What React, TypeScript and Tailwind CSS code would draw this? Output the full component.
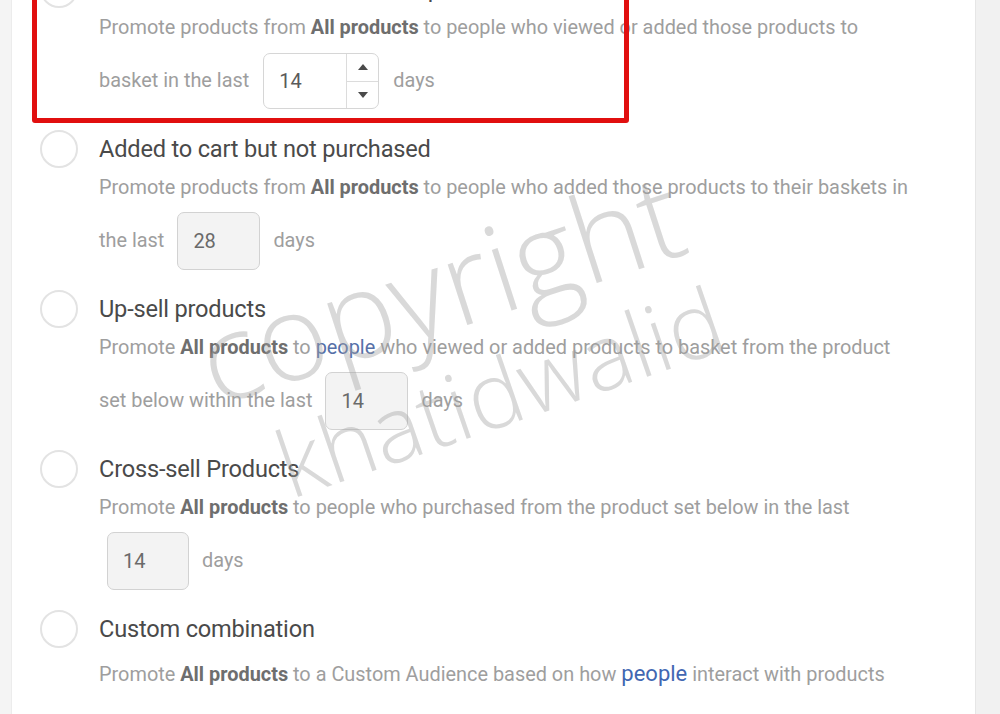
import React from 'react';

type InputProps = { value: string; width: string; spinner?: boolean };

function DaysInput({ value, width, spinner }: InputProps) {
  if (spinner) {
    return (
      <div className={`flex h-[56px] ${width} rounded-[7px] border border-[#d6d6d6] bg-white`}>
        <div className="flex flex-1 items-center pl-[15px] text-[20px] text-[#5a5a5a]">{value}</div>
        <div className="flex w-[32px] flex-col border-l border-[#dcdcdc]">
          <div className="flex flex-1 items-center justify-center border-b border-[#dcdcdc]">
            <svg width="12" height="8" viewBox="0 0 12 8">
              <path d="M6 1 L11 7 L1 7 Z" fill="#4a4a4a" />
            </svg>
          </div>
          <div className="flex flex-1 items-center justify-center">
            <svg width="12" height="8" viewBox="0 0 12 8">
              <path d="M1 1 L11 1 L6 7 Z" fill="#4a4a4a" />
            </svg>
          </div>
        </div>
      </div>
    );
  }
  return (
    <div
      className={`flex h-[58px] ${width} items-center rounded-[7px] border border-[#d2d2d2] bg-[#f3f3f3] pl-[15px] text-[20px] text-[#6a6a6a]`}
    >
      {value}
    </div>
  );
}

function Radio() {
  return <div className="h-[38px] w-[38px] shrink-0 rounded-full border-2 border-[#e3e3e3] bg-white" />;
}

function Row({ title, children, last }: { title: string; children: React.ReactNode; last?: boolean }) {
  return (
    <div className={last ? '' : 'pb-[24px]'}>
      <div className="flex h-[30px] items-center gap-[21px]">
        <Radio />
        <div className="text-[23.6px] leading-[30px] tracking-[-0.2px] text-[#4a4a4a]">{title}</div>
      </div>
      <div className={`ml-[59px] ${last ? 'mt-[15px]' : 'mt-[9px]'}`}>{children}</div>
    </div>
  );
}

const B = ({ children }: { children: React.ReactNode }) => (
  <span className="font-bold text-[#6e6e6e]">{children}</span>
);

export default function App() {
  return (
    <div className="flex h-[714px] w-[1000px] overflow-hidden bg-[#f3f3f3] font-['Roboto',sans-serif]">
      <div className="w-[12px] shrink-0 border-r border-[#ececec] bg-[#f4f4f4]" />
      <div className="relative flex-1 overflow-hidden bg-white">
        <div className="-mt-[26px] pl-[28px] text-[19.9px] leading-[30px] text-[#9e9e9e]">
          <Row title="Viewed or added to cart but not purchased">
            <div className="whitespace-nowrap">
              Promote products from <B>All products</B> to people who viewed or added those products to
            </div>
            <div className="mt-[9px] flex h-[58px] items-center gap-[14px]">
              <span>basket in the last</span>
              <DaysInput value="14" width="w-[116px]" spinner />
              <span>days</span>
            </div>
          </Row>
          <Row title="Added to cart but not purchased">
            <div className="whitespace-nowrap">
              Promote products from <B>All products</B> to people who added those products to their baskets in
            </div>
            <div className="mt-[9px] flex h-[58px] items-center gap-[13px]">
              <span>the last</span>
              <DaysInput value="28" width="w-[83px]" />
              <span>days</span>
            </div>
          </Row>
          <Row title="Up-sell products">
            <div className="whitespace-nowrap">
              Promote <B>All products</B> to <span className="text-[#5670a8]">people</span> who viewed or added
              products to basket from the product
            </div>
            <div className="mt-[9px] flex h-[58px] items-center gap-[13px]">
              <span>set below within the last</span>
              <DaysInput value="14" width="w-[83px]" />
              <span>days</span>
            </div>
          </Row>
          <Row title="Cross-sell Products">
            <div className="whitespace-nowrap">
              Promote <B>All products</B> to people who purchased from the product set below in the last
            </div>
            <div className="mt-[9px] flex h-[58px] items-center gap-[13px] pl-[8px]">
              <DaysInput value="14" width="w-[82px]" />
              <span>days</span>
            </div>
          </Row>
          <Row title="Custom combination" last>
            <div className="whitespace-nowrap">
              Promote <B>All products</B> to a Custom Audience based on how{' '}
              <span className="text-[22px] text-[#4267b2]">people</span> interact with products
            </div>
          </Row>
        </div>

        {/* annotation box over the first option */}
        <div className="pointer-events-none absolute left-[20px] top-[-12px] h-[135px] w-[597px] rounded-[3px] border-[5px] border-[#e10f0f]" />

        {/* watermark */}
        <div className="pointer-events-none absolute left-[208px] top-[300px] h-[120px] origin-bottom-left -rotate-[18deg] whitespace-nowrap font-['Open_Sans',sans-serif] text-[120px] font-light leading-none text-[rgba(160,160,160,0.4)]">
          copyright
        </div>
        <div className="pointer-events-none absolute left-[282px] top-[418px] h-[92px] origin-bottom-left -rotate-[19deg] whitespace-nowrap font-['Open_Sans',sans-serif] text-[92px] font-light leading-none text-[rgba(160,160,160,0.4)]">
          khatidwalid
        </div>
      </div>
      <div className="w-[25px] shrink-0 border-l border-[#e6e6e6] bg-[#f1f1f1]" />
    </div>
  );
}
